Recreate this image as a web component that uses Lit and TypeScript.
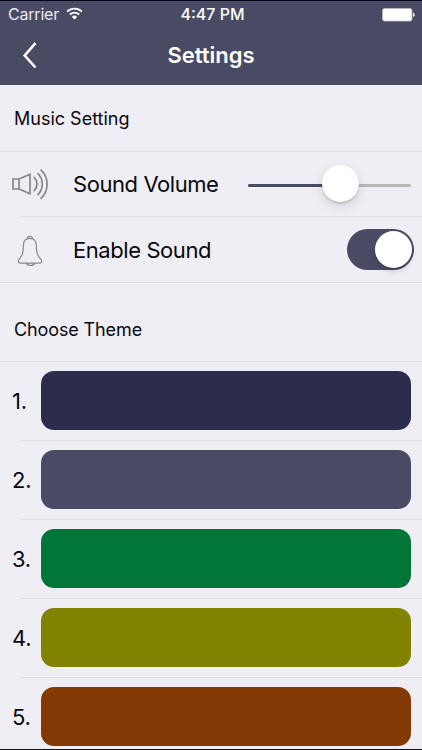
import { LitElement, html, css } from "lit";
import { customElement, state } from "lit/decorators.js";

@customElement("app-root")
export class AppRoot extends LitElement {
  @state() private volume = 56.5;
  @state() private soundOn = true;

  private themes = ["#2c2d4d", "#494a64", "#027639", "#838303", "#823904"];

  static styles = css`
    :host {
      display: flex;
      flex-direction: column;
      box-sizing: border-box;
      height: 750px;
      overflow: hidden;
      background: #efeef4;
      border-top: 1px solid #060518;
      border-bottom: 1px solid #111116;
      color: #08080c;
      font-family: Inter, "Liberation Sans", sans-serif;
    }
    header {
      flex: none;
      height: 84px;
      background: #494a64;
      color: #fff;
    }
    .status {
      display: grid;
      grid-template-columns: 1fr auto 1fr;
      align-items: center;
      height: 27px;
      padding: 0 8px 0 8px;
      font-size: 16px;
      line-height: 27px;
    }
    .carrier { display: flex; align-items: center; gap: 7px; color: #e9e9f1; letter-spacing: -0.2px; }
    .wifi { width: 17px; height: 13px; display: block; margin-top: -2px; }
    .time { font-weight: 500; letter-spacing: 0; padding-left: 3px; }
    .battery { justify-self: end; width: 33px; height: 14px; display: block; margin-right: -1px; }
    .nav {
      display: grid;
      grid-template-columns: 60px 1fr 60px;
      height: 55px;
      align-items: center;
    }
    .back { display: block; width: 16px; height: 28px; margin: -2px 0 0 22px; }
    h1 { margin: 0; text-align: center; font-size: 22px; font-weight: 600; line-height: 55px; letter-spacing: -0.02px; }
    .section {
      flex: none;
      box-sizing: border-box;
      padding-left: 14px;
      font-size: 18px;
      border-bottom: 1px solid #dedde2;
      margin: 0;
      font-weight: 400;
    }
    .music { height: 67px; line-height: 67px; }
    .choose { height: 79px; line-height: 93px; letter-spacing: -0.12px; }
    .row {
      flex: none;
      box-sizing: border-box;
      display: flex;
      align-items: center;
      padding-left: 11px;
      font-size: 22px;
    }
    .rule { flex: none; height: 1px; margin-left: 20px; background: #dedde2; }
    .full { margin-left: 0; }
    .vol { height: 64px; }
    .bell { height: 65px; }
    .icon { width: 38px; height: 34px; flex: none; display: block; }
    .bell .icon { margin-top: 2px; }
    .label { width: 175px; padding-left: 24px; box-sizing: border-box; letter-spacing: -0.43px; }
    .slider {
      width: 163px;
      height: 3px;
      border-radius: 2px;
      background: #b8b8ba;
      margin-left: 24px;
      margin-top: 2px;
      position: relative;
    }
    .fill { height: 3px; border-radius: 2px; background: #494a64; }
    .knob {
      position: absolute;
      top: -19px;
      width: 37px;
      height: 37px;
      margin-left: -18.5px;
      border-radius: 50%;
      background: #fff;
      box-shadow: 0 2px 2px rgba(0, 0, 0, 0.13), 0 4px 12px rgba(0, 0, 0, 0.12);
    }
    .switch {
      box-sizing: border-box;
      display: flex;
      align-items: center;
      width: 67px;
      height: 41px;
      margin: -1px 8px 0 auto;
      padding: 0 2px;
      border: 0;
      border-radius: 21px;
      background: #c8c8cc;
    }
    .on { background: #494a64; justify-content: flex-end; }
    .dot {
      width: 37px;
      height: 37px;
      border-radius: 50%;
      background: #fff;
      box-shadow: 0 4px 4px rgba(0, 0, 0, 0.13);
    }
    .theme { height: 78px; }
    .num { width: 30px; flex: none; box-sizing: border-box; padding-left: 1px; letter-spacing: -0.3px; }
    .swatch { width: 370px; height: 59px; border-radius: 13px; margin-top: -1px; }
  `;

  render() {
    return html`
      <header>
        <div class="status">
          <div class="carrier">
            <span class="cname">Carrier</span>
            <svg class="wifi" viewBox="0 0 17 13" fill="none" stroke="#fff" stroke-width="1.8">
              <path d="M1.1 4.6a10.5 10.5 0 0 1 14.8 0M3.8 7.5a6.6 6.6 0 0 1 9.4 0" />
              <path d="M8.5 12.6 5.9 9.9a3.7 3.7 0 0 1 5.2 0z" fill="#fff" stroke="none" />
            </svg>
          </div>
          <span class="time">4:47 PM</span>
          <svg class="battery" viewBox="0 0 33 14">
            <rect x=".5" y=".5" width="29.5" height="12.6" rx="2" fill="#fff" stroke="#b9b9c6" stroke-width=".8" />
            <path d="M31 4.7c2.2.6 2.2 3.7 0 4.3z" fill="#fff" />
          </svg>
        </div>
        <div class="nav">
          <svg class="back" viewBox="0 0 16 28" fill="none" stroke="#fff" stroke-width="2.6">
            <path d="M13.5 2.2 2.7 14.5 13.5 26.5" />
          </svg>
          <h1>Settings</h1>
        </div>
      </header>

      <h2 class="section music">Music Setting</h2>
      <div class="row vol">
        <svg class="icon" viewBox="0 0 38 34" fill="none" stroke="#87878b" stroke-width="1.7">
          <path d="M2 12h6v10H2zM8 12l11-4.700v19.400L8 22M8 12v10M23.200 10.500c3.600 3.400 3.600 9.800 0 13.200M27 6.600c5.700 5.600 5.700 15.400 0 21M30 3.200c8.200 7.700 8.200 20.400 0 28.100" stroke-linecap="round" />
        </svg>
        <span class="label">Sound Volume</span>
        <div class="slider">
          <div class="fill" style="width:${this.volume}%"></div>
          <div class="knob" style="left:${this.volume}%"></div>
        </div>
      </div>
      <div class="rule"></div>
      <div class="row bell">
        <svg class="icon" viewBox="0 0 38 34" fill="none" stroke="#87878b" stroke-width="1.2">
          <path d="M16.2 4.800c0-3.400 5.200-3.400 5.200 0M18.800 4.300c-4 0-6.400 2.800-6.400 6.900 0 8.400-1.100 10-4.100 14-1.800 2.400-.8 3.900 1.100 3.900h19.400c2 0 2.600-1.500.9-3.900-3-4-4.400-5.600-4.400-14 0-4.100-2.500-6.900-6.500-6.900zM15.400 29.300c1 2.900 7.300 2.900 8.300 0" />
        </svg>
        <span class="label">Enable Sound</span>
        <button
          class="switch ${this.soundOn ? "on" : ""}"
          aria-label="Enable Sound"
          @click=${() => (this.soundOn = !this.soundOn)}
        ><span class="dot"></span></button>
      </div>
      <div class="rule full"></div>
      <h2 class="section choose">Choose Theme</h2>
      ${this.themes.map(
        (c, i) => html`
          <div class="row theme">
            <span class="num">${i + 1}.</span>
            <div class="swatch" style="background:${c}"></div>
          </div>
          <div class="rule"></div>
        `
      )}
    `;
  }
}
